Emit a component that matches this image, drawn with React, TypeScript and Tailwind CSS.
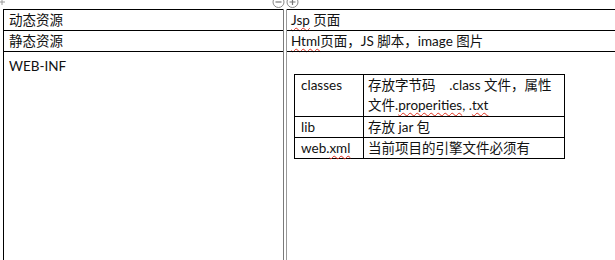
import React from "react";

const wavy =
  "underline decoration-wavy decoration-[#e0301e] decoration-[1px] underline-offset-[2px]";

export default function App() {
  return (
    <div className="relative h-[260px] w-[615px] overflow-hidden bg-white font-['Lato','Noto_Sans_CJK_SC',sans-serif] text-[13.5px] leading-[20px] text-[#111]">
      {/* table move handle */}
      <svg className="absolute left-0 top-0" width="6" height="6" viewBox="0 0 6 6">
        <path d="M2 0v5M0 2h5" stroke="#9a9a9a" strokeWidth="1" />
      </svg>

      <div className="flex gap-[2px] pl-[3px] pt-[9px]">
        {/* left column */}
        <div className="flex h-[320px] w-[281px] shrink-0 flex-col border-l border-r border-l-black border-r-[#7a7a7a]">
          <div className="h-[21px] border-t border-black pl-[5px]">动态资源</div>
          <div className="h-[21px] border-t border-black pl-[5px]">静态资源</div>
          <div className="flex-1 border-t border-black pl-[5px] pt-[4px]">WEB-INF</div>
        </div>
        {/* right column */}
        <div className="flex h-[320px] w-[400px] shrink-0 flex-col border-l border-l-[#9a9a9a]">
          <div className="h-[21px] border-t border-black pl-[4px]">
            <span className={wavy}>Jsp</span> 页面
          </div>
          <div className="h-[21px] border-t border-black pl-[4px]">
            <span className={wavy}>Html</span>页面，JS 脚本，image 图片
          </div>
          <div className="flex-1 border-t border-black pl-[7px] pt-[22px]">
            <div className="flex w-[271px] flex-col border border-black">
              <div className="flex h-[41px]">
                <div className="w-[69px] shrink-0 border-r border-black pl-[6px]">classes</div>
                <div className="flex-1 whitespace-pre pl-[4px]">
                  {"存放字节码    .class 文件，属性"}
                  <br />
                  文件.<span className={wavy}>properities</span>, .<span className={wavy}>txt</span>
                </div>
              </div>
              <div className="flex h-[21px] border-t border-black">
                <div className="w-[69px] shrink-0 border-r border-black pl-[6px]">lib</div>
                <div className="flex-1 pl-[4px]">存放 jar 包</div>
              </div>
              <div className="flex h-[21px] border-t border-black">
                <div className="w-[69px] shrink-0 border-r border-black pl-[6px]">
                  web.<span className={wavy}>xml</span>
                </div>
                <div className="flex-1 pl-[4px]">当前项目的引擎文件必须有</div>
              </div>
            </div>
          </div>
        </div>
      </div>

      {/* insert / delete column handles */}
      <svg className="absolute left-[271px] top-[-4px]" width="32" height="14" viewBox="0 0 32 14">
        <circle cx="7.5" cy="6" r="5.5" fill="white" stroke="#8a8a8a" strokeWidth="1" />
        <path d="M4.5 6h6" stroke="#777" strokeWidth="1.2" />
        <circle cx="21.5" cy="6" r="5.5" fill="white" stroke="#8a8a8a" strokeWidth="1" />
        <path d="M18.5 6h6M21.5 3v6" stroke="#777" strokeWidth="1.2" />
      </svg>
    </div>
  );
}
